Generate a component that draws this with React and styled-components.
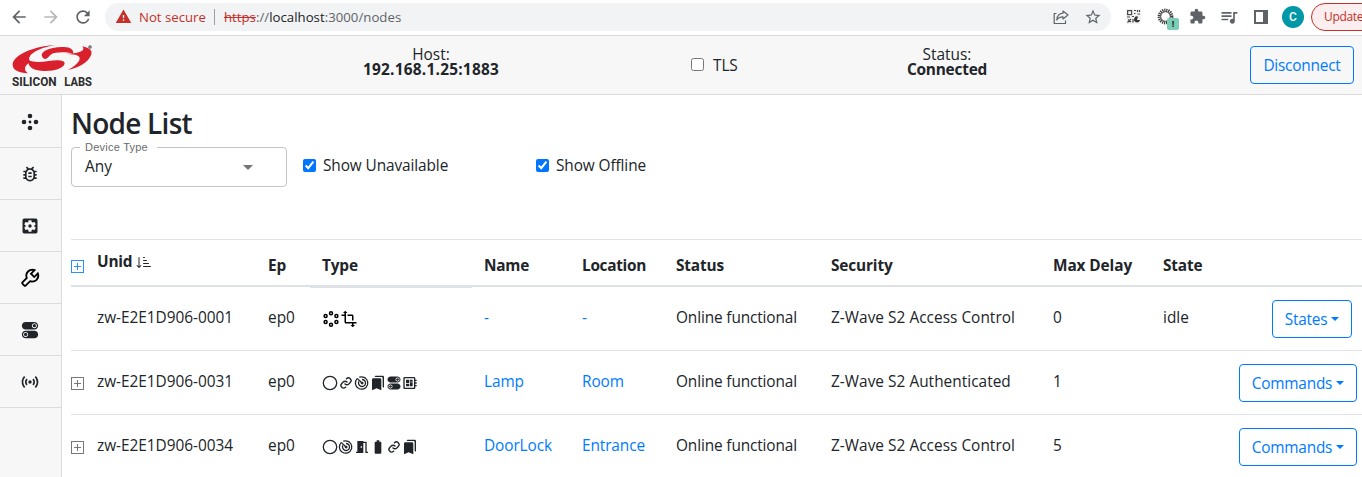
import React from "react";
import styled, { createGlobalStyle } from "styled-components";
import {
  MdArrowBack,
  MdArrowForward,
  MdBatteryFull,
  MdBookmarks,
  MdExtension,
  MdMeetingRoom,
  MdOutlineBugReport,
  MdOutlineDeveloperBoard,
  MdQueueMusic,
  MdRefresh,
  MdSensors,
  MdSettingsApplications,
  MdStarBorder,
  MdTransform,
  MdWarning,
} from "react-icons/md";
import { BiLink, BiWrench } from "react-icons/bi";
import { BsSortDownAlt } from "react-icons/bs";
import { IoIosSwitch } from "react-icons/io";

const GlobalStyle = createGlobalStyle`
  *, *::before, *::after { box-sizing: border-box; }
  html, body { margin: 0; height: 100%; overflow: hidden; background: #fff; }
  body {
    font: 400 15.4px/24px "Open Sans", "Noto Sans", sans-serif;
    color: #212529;
  }
  svg { display: block; flex: none; }
`;

const Window = styled.div`
  width: 1362px;
  height: 477px;
  overflow: hidden;
  display: flex;
  flex-direction: column;
`;

/* Browser toolbar */
const BrowserBar = styled.div`
  height: 36px;
  flex: none;
  display: flex;
  align-items: center;
  padding: 0 0 2px 3px;
  border-bottom: 1px solid #dadada;
  color: #5f6368;
`;

const BarSlot = styled.div`
  width: 32px;
  height: 28px;
  flex: none;
  display: flex;
  align-items: center;
  justify-content: center;
  position: relative;
  font-size: ${(p) => p.$size || 20}px;
  opacity: ${(p) => (p.$faded ? 0.45 : 1)};
`;

const AddressPill = styled.div`
  width: 1006px;
  height: 28px;
  flex: none;
  margin: 0 6px;
  padding: 0 2px 0 10px;
  border-radius: 14px;
  background: #f1f3f4;
  display: flex;
  align-items: center;
  font-size: 13.2px;
`;

const NotSecure = styled.span`
  display: flex;
  align-items: center;
  gap: 7px;
  color: #c5302a;
`;

const Separator = styled.span`
  width: 1px;
  height: 16px;
  margin: 0 9px 0 8px;
  background: #9aa0a6;
`;

const Url = styled.span`
  flex: 1;
  letter-spacing: 0.03px;
  s { color: #c5302a; }
  b { font-weight: 400; color: #202124; }
`;

const Badge = styled.span`
  position: absolute;
  left: 18px;
  top: 15px;
  width: 12px;
  height: 12px;
  border-radius: 2px;
  background: #7bcdb5;
  color: #202124;
  font: 700 9px/12px "Open Sans", sans-serif;
  text-align: center;
`;

const Avatar = styled.span`
  width: 22px;
  height: 22px;
  border-radius: 50%;
  background: #0097a7;
  color: #fff;
  font: 500 12px/22px Roboto, sans-serif;
  text-align: center;
`;

const UpdateButton = styled.div`
  width: 90px;
  height: 28px;
  flex: none;
  margin-left: 2px;
  padding-left: 12px;
  border: 1px solid #c5302a;
  border-radius: 14px;
  background: #faeeee;
  color: #c5302a;
  font-size: 12px;
  letter-spacing: -0.35px;
  line-height: 25px;
`;

/* Application header */
const Header = styled.header`
  height: 59px;
  flex: none;
  display: grid;
  grid-template-columns: 172px 519px 128px 256px 1fr;
  align-items: center;
  padding: 0 8px 1px 0;
  border-bottom: 1px solid #dcdcdc;
  background: #f7f7f7;
`;

const LogoBox = styled.div`
  padding: 2px 0 0 11px;
`;

const HeaderInfo = styled.div`
  text-align: center;
  line-height: 15px;
  padding: 0 ${(p) => p.$inset || 0}px 5px 0;
  b {
    display: block;
    letter-spacing: ${(p) => p.$track}px;
  }
`;

const CheckLabel = styled.label`
  width: ${(p) => p.$width}px;
  display: flex;
  align-items: center;
  letter-spacing: -0.1px;
  padding-top: ${(p) => p.$drop || 0}px;
  input { width: 13px; height: 13px; margin: 0 ${(p) => p.$gap || 7}px 2px 0; }
`;

const OutlineButton = styled.button`
  height: 38px;
  width: ${(p) => p.$width}px;
  flex: none;
  display: inline-flex;
  align-items: center;
  justify-content: center;
  padding: ${(p) => p.$drop || 0}px 0 0;
  border: 1px solid #007bff;
  border-radius: 4px;
  background: transparent;
  color: #007bff;
  font: inherit;
  letter-spacing: -0.22px;
  justify-self: end;
`;

const Caret = styled.span`
  margin: 0 0 2px 4px;
  border-top: 4.5px solid currentColor;
  border-left: 4.5px solid transparent;
  border-right: 4.5px solid transparent;
`;

/* Body */
const Body = styled.div`
  flex: 1;
  min-height: 0;
  display: flex;
`;

const Nav = styled.nav`
  width: 62px;
  flex: none;
  padding-top: 1px;
  background: #f7f7f7;
  border-right: 1px solid #dcdcdc;
`;

const NavItem = styled.div`
  height: 52px;
  border-bottom: 1px solid #dcdcdc;
  display: flex;
  align-items: center;
  justify-content: center;
  font-size: ${(p) => p.$size}px;
  padding: 1px 1px 0 0;
`;

const Main = styled.main`
  flex: none;
  width: 1300px;
  padding-left: 9px;
`;

const Title = styled.h3`
  margin: 0;
  height: 47px;
  padding-top: 11px;
  font-size: 28px;
  line-height: 34px;
  font-weight: 600;
  letter-spacing: -0.75px;
`;

const Filters = styled.div`
  height: 97px;
  display: flex;
  align-items: flex-start;
`;

const SelectBox = styled.fieldset`
  width: 216px;
  height: 45px;
  margin: 0 16px 0 0;
  padding: 0 33px 0 13px;
  border: 1px solid #c4c4c4;
  border-radius: 4px;
  legend {
    margin-left: -5px;
    padding: 0 10px 0 5px;
    width: 77px;
    height: 11px;
    font: 11px/11px "Liberation Sans", sans-serif;
    letter-spacing: 0.24px;
    white-space: nowrap;
    color: #6b6b6b;
  }
`;

const SelectValue = styled.div`
  display: flex;
  align-items: center;
  justify-content: space-between;
  height: 28px;
`;

const SelectArrow = styled.span`
  border-top: 5px solid #757575;
  border-left: 5px solid transparent;
  border-right: 5px solid transparent;
`;

const FilterCheck = styled.div`
  padding-top: 12px;
`;

/* Table */
const Table = styled.div`
  border-top: 1px solid #dee2e6;
`;

const Row = styled.div`
  display: grid;
  grid-template-columns: 14px 171px 54px 162px 98px 94px 155px 222px 110px 71px 140px;
  grid-template-rows: 100%;
  height: ${(p) => (p.$head ? 47 : 64)}px;
  border-bottom: ${(p) => (p.$head ? 2 : 1)}px solid #dee2e6;
  font-weight: ${(p) => (p.$head ? 700 : 400)};
`;

const Cell = styled.div`
  display: flex;
  align-items: center;
  min-width: 0;
  white-space: nowrap;
  padding: ${(p) => p.$drop || 0}px 0 ${(p) => p.$lift || 0}px ${(p) => (p.$flush ? 0 : 12)}px;
  letter-spacing: ${(p) => p.$track || 0}px;
  color: ${(p) => (p.$link ? "#007bff" : "inherit")};
`;

const TypeHeadCell = styled(Cell)`
  margin-bottom: -3px;
  border-bottom: 1px solid #dee2e6;
`;

const TypeIcons = styled.div`
  display: flex;
  align-items: center;
  font-size: 16px;
  padding-top: 1px;
`;

const ActionCell = styled.div`
  display: flex;
  align-items: center;
  justify-content: flex-end;
  padding: 1px ${(p) => p.$right}px 0 0;
`;

const Logo = () => (
  <svg width="84" height="44" viewBox="33 135 252 132">
    <g fill="#da1f2d">
      <path d="M166 138C108 140 38 167 38 197C38 213 56 221 84 223C70 213 72 200 92 188C78 176 96 151 166 138Z" />
      <path d="M84 184C104 191 124 189 146 186C168 182 192 182 194 192C194 206 164 217 132 216C104 215 84 208 84 184Z" />
      <path d="M126 172C120 154 160 143 192 144C212 145 222 152 219 164C196 158 166 159 154 166C146 171 143 181 134 180Q128 179 126 172Z" />
      <path d="M247 142C270 147 280 156 272 171C264 190 237 206 203 213C222 203 238 190 239 179C240 167 219 165 192 165C220 165 262 160 247 142Z" />
    </g>
    <circle cx="270" cy="144" r="4.5" fill="#888" stroke="#555" strokeWidth="1.5" />
    <text x="36" y="260" fontFamily="Roboto, sans-serif" fontWeight="700" fontSize="40" textLength="134" lengthAdjust="spacingAndGlyphs" fill="#2b2b2b">SILICON</text>
    <text x="193" y="260" fontFamily="Roboto, sans-serif" fontWeight="700" fontSize="40" textLength="83" lengthAdjust="spacingAndGlyphs" fill="#2b2b2b">LABS</text>
  </svg>
);

const NodesIcon = () => (
  <svg width="18" height="18" viewBox="0 0 18 18" fill="#212529">
    <circle cx="9" cy="3" r="2.3" />
    <circle cx="9" cy="15" r="2.3" />
    <circle cx="3" cy="9" r="2.3" />
    <circle cx="15" cy="9" r="2.3" />
    <circle cx="9" cy="9" r="1.4" />
  </svg>
);

const HexNodesIcon = () => (
  <svg width="18" height="16" viewBox="-1 0 18 16" fill="none" stroke="#000" strokeWidth="1.5">
    <circle cx="8" cy="2.3" r="1.5" />
    <circle cx="8" cy="13.7" r="1.5" />
    <circle cx="2.6" cy="5" r="1.5" />
    <circle cx="2.6" cy="11" r="1.5" />
    <circle cx="13.4" cy="5" r="1.5" />
    <circle cx="13.4" cy="11" r="1.5" />
  </svg>
);

const TransformIcon = () => <MdTransform size={18} color="#000" />;

const CircleIcon = () => (
  <svg width="16" height="16" viewBox="0 0 16 16" fill="none" stroke="#212529" strokeWidth="1.3">
    <circle cx="8" cy="8" r="6.7" />
  </svg>
);

const RadarIcon = () => (
  <svg width="16" height="16" viewBox="0 0 16 16" fill="none" stroke="#212529" strokeWidth="1.3">
    <path d="M3.2 3.6A6.2 6.2 0 1 0 8 1.8" />
    <path d="M4.9 6.4A3.5 3.5 0 1 0 8 4.5" />
    <path d="M3.2 3.4L8 8" />
    <path d="M5.2 2.2L8 1.8" />
    <circle cx="8.1" cy="8.1" r="0.8" fill="#212529" />
  </svg>
);

const ExpandIcon = ({ color }) => (
  <svg width="13" height="13" viewBox="0 0 13 13" fill="none" stroke={color}>
    <rect x="0.5" y="0.5" width="12" height="12" />
    <path d="M3 6.5H10M6.5 3V10" />
  </svg>
);

const ShareIcon = () => (
  <svg width="16" height="16" viewBox="0 0 16 16" fill="none" stroke="#5f6368" strokeWidth="1.2" strokeLinejoin="round">
    <path d="M3.5 4.5H1.2V14.5H12.5V11.5" />
    <path d="M10 2L15 6L10 10V7.8C7 7.8 5 8.8 3.8 11C4 7.5 6 4.6 10 4.2Z" />
  </svg>
);

const QrIcon = () => (
  <svg width="15" height="15" viewBox="0 0 15 15">
    <rect width="15" height="15" fill="#f3f3f3" />
    <g fill="none" stroke="#4a4a4a" strokeWidth="1.2">
      <rect x="1.6" y="1.6" width="4" height="4" />
      <path d="M8 1.5H10M8 4.5H9.5M11.5 1V3M13.5 1V3M11.5 5H14M1 8H4M6 7.5H8M2 10.5L5 13M1.5 13.5L5 10M7 10V13.5" />
    </g>
    <path d="M12 7.5A3 3 0 1 0 14 11H11Z" fill="#333" />
  </svg>
);

const GearRingIcon = () => (
  <svg width="17" height="17" viewBox="0 0 17 17" fill="none" stroke="#3c3c3c">
    <circle cx="8.5" cy="8.5" r="6.4" strokeWidth="3" strokeDasharray="1.2 0.81" />
    <circle cx="8.5" cy="8.5" r="4.8" strokeWidth="1" />
  </svg>
);

const PanelIcon = () => (
  <svg width="14" height="14" viewBox="0 0 14 14" fill="#5f6368">
    <path d="M0 0H14V14H0ZM2 2V12H9V2Z" fillRule="evenodd" />
  </svg>
);

const typeIcons = {
  hex: HexNodesIcon,
  transform: TransformIcon,
  circle: CircleIcon,
  link: BiLink,
  radar: RadarIcon,
  bookmarks: MdBookmarks,
  toggles: IoIosSwitch,
  board: MdOutlineDeveloperBoard,
  door: MdMeetingRoom,
  battery: MdBatteryFull,
};

const navItems = [
  { Icon: NodesIcon, size: 18 },
  { Icon: MdOutlineBugReport, size: 20 },
  { Icon: MdSettingsApplications, size: 20 },
  { Icon: BiWrench, size: 22, color: "#000" },
  { Icon: IoIosSwitch, size: 20 },
  { Icon: MdSensors, size: 20 },
];

const nodes = [
  { unid: "zw-E2E1D906-0001", types: ["hex", "transform"], name: "-", location: "-", security: "Z-Wave S2 Access Control", delay: "0", state: "idle", action: "States" },
  { unid: "zw-E2E1D906-0031", types: ["circle", "link", "radar", "bookmarks", "toggles", "board"], name: "Lamp", location: "Room", security: "Z-Wave S2 Authenticated", delay: "1", state: "", action: "Commands", expandable: true },
  { unid: "zw-E2E1D906-0034", types: ["circle", "radar", "door", "battery", "link", "bookmarks"], name: "DoorLock", location: "Entrance", security: "Z-Wave S2 Access Control", delay: "5", state: "", action: "Commands", expandable: true },
];

export default function App() {
  return (
    <Window>
      <GlobalStyle />
      <BrowserBar>
        <BarSlot><MdArrowBack /></BarSlot>
        <BarSlot $faded><MdArrowForward /></BarSlot>
        <BarSlot><MdRefresh /></BarSlot>
        <AddressPill>
          <NotSecure><MdWarning size={17} />Not secure</NotSecure>
          <Separator />
          <Url><s>https</s>://<b>localhost</b>:3000/nodes</Url>
          <BarSlot><ShareIcon /></BarSlot>
          <BarSlot $size={18}><MdStarBorder /></BarSlot>
        </AddressPill>
        <BarSlot><QrIcon /></BarSlot>
        <BarSlot><GearRingIcon /><Badge>!</Badge></BarSlot>
        <BarSlot $size={17}><MdExtension /></BarSlot>
        <BarSlot><MdQueueMusic /></BarSlot>
        <BarSlot><PanelIcon /></BarSlot>
        <BarSlot><Avatar>C</Avatar></BarSlot>
        <UpdateButton>Update</UpdateButton>
      </BrowserBar>

      <Header>
        <LogoBox><Logo /></LogoBox>
        <HeaderInfo $track={0.24} $inset={1}>Host:<b>192.168.1.25:1883</b></HeaderInfo>
        <CheckLabel $gap={9} $drop={2}><input type="checkbox" />TLS</CheckLabel>
        <HeaderInfo $track={-0.22}>Status:<b>Connected</b></HeaderInfo>
        <OutlineButton $width={104} $drop={2}>Disconnect</OutlineButton>
      </Header>

      <Body>
        <Nav>
          {navItems.map(({ Icon, size, color }, i) => (
            <NavItem key={i} $size={size}><Icon color={color} /></NavItem>
          ))}
        </Nav>
        <Main>
          <Title>Node List</Title>
          <Filters>
            <SelectBox>
              <legend>Device Type</legend>
              <SelectValue>Any<SelectArrow /></SelectValue>
            </SelectBox>
            <FilterCheck>
              <CheckLabel $width={233}><input type="checkbox" defaultChecked />Show Unavailable</CheckLabel>
            </FilterCheck>
            <FilterCheck>
              <CheckLabel $width={200}><input type="checkbox" defaultChecked />Show Offline</CheckLabel>
            </FilterCheck>
          </Filters>
          <Table>
            <Row $head>
              <Cell $flush $drop={8}><ExpandIcon color="#2b90ff" /></Cell>
              <Cell $track={-0.2} $lift={1}>Unid&nbsp;<BsSortDownAlt size={16} /></Cell>
              <Cell $track={-0.15} $drop={7}>Ep</Cell>
              <TypeHeadCell $track={-0.15} $drop={5}>Type</TypeHeadCell>
              <Cell $track={-0.25} $drop={7}>Name</Cell>
              <Cell $track={-0.3} $drop={7}>Location</Cell>
              <Cell $track={-0.15} $drop={7}>Status</Cell>
              <Cell $track={-0.15} $drop={7}>Security</Cell>
              <Cell $track={-0.1} $drop={7}>Max Delay</Cell>
              <Cell $track={-0.15} $drop={7}>State</Cell>
              <div />
            </Row>
            {nodes.map((n) => (
              <Row key={n.unid}>
                <Cell $flush $drop={2}>{n.expandable && <ExpandIcon color="#777" />}</Cell>
                <Cell $track={-0.03} $lift={2}>{n.unid}</Cell>
                <Cell $lift={2}>ep0</Cell>
                <Cell>
                  <TypeIcons>
                    {n.types.map((t) => {
                      const Icon = typeIcons[t];
                      return <Icon key={t} />;
                    })}
                  </TypeIcons>
                </Cell>
                <Cell $track={-0.1} $lift={2} $link>{n.name}</Cell>
                <Cell $track={-0.1} $lift={2} $link>{n.location}</Cell>
                <Cell $track={-0.13} $lift={2}>Online functional</Cell>
                <Cell $track={0.03} $lift={2}>{n.security}</Cell>
                <Cell $lift={2}>{n.delay}</Cell>
                <Cell $lift={2}>{n.state}</Cell>
                <ActionCell $right={n.action === "States" ? 10 : 5}>
                  <OutlineButton $width={n.action === "States" ? 80 : 118} $drop={1}>{n.action}<Caret /></OutlineButton>
                </ActionCell>
              </Row>
            ))}
          </Table>
        </Main>
      </Body>
    </Window>
  );
}
